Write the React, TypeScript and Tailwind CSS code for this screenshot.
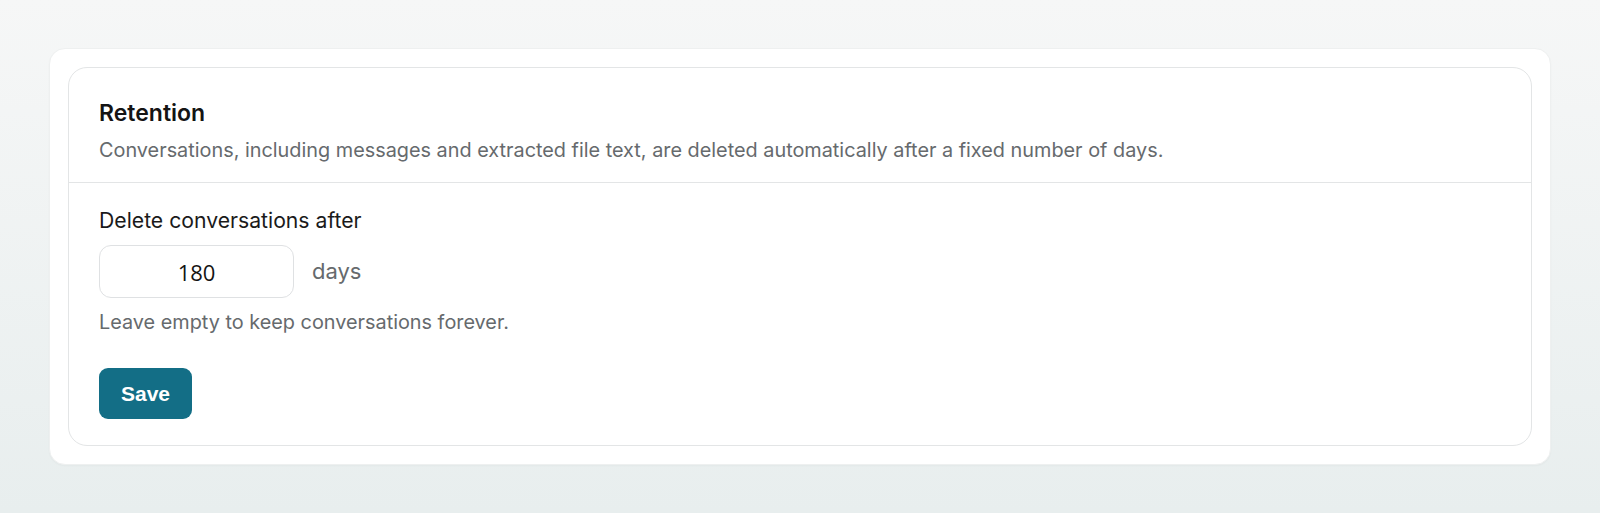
import React from "react";

export default function App() {
  return (
    <div
      className="min-h-[513px] w-full bg-gradient-to-b from-[#f6f7f7] to-[#e8eeee] pt-[48px] px-[49px]"
      style={{ fontFamily: "Inter, 'Noto Sans', sans-serif" }}
    >
      <div className="rounded-[16px] bg-white p-[18px] shadow-[0_1px_2px_rgba(0,0,0,0.03)] border border-[#eef0f0]">
        <div className="rounded-[19px] border border-[#e3e5e6]">
          <div className="px-[30px] pt-[30px] pb-[18px] border-b border-[#e3e5e6]">
            <h2 className="text-[23px] leading-[30px] font-semibold text-[#141414]">Retention</h2>
            <p className="mt-[8px] text-[19.85px] leading-[28px] text-[#666a6d]">
              Conversations, including messages and extracted file text, are deleted automatically after a fixed number of days.
            </p>
          </div>
          <div className="px-[30px] pt-[23px] pb-[26px]">
            <label className="block text-[21.2px] leading-[28px] font-normal text-[#1a1a1a]">Delete conversations after</label>
            <div className="mt-[11px] flex items-center gap-[18px]">
              <input
                defaultValue="180"
                className="h-[53px] w-[195px] rounded-[12px] border border-[#dfe1e3] bg-white text-center text-[22px] text-[#141414] outline-none"
                style={{ fontFamily: "'Open Sans', Inter, sans-serif" }}
              />
              <span className="text-[22px] text-[#666a6d]">days</span>
            </div>
            <p className="mt-[10px] text-[19.85px] leading-[28px] text-[#666a6d]">Leave empty to keep conversations forever.</p>
            <button
              className="mt-[32px] h-[51px] w-[93px] rounded-[9px] bg-[#136e86] text-[21px] font-semibold text-white"
              style={{ fontFamily: "'Liberation Sans', Arial, sans-serif" }}
            >
              Save
            </button>
          </div>
        </div>
      </div>
    </div>
  );
}
